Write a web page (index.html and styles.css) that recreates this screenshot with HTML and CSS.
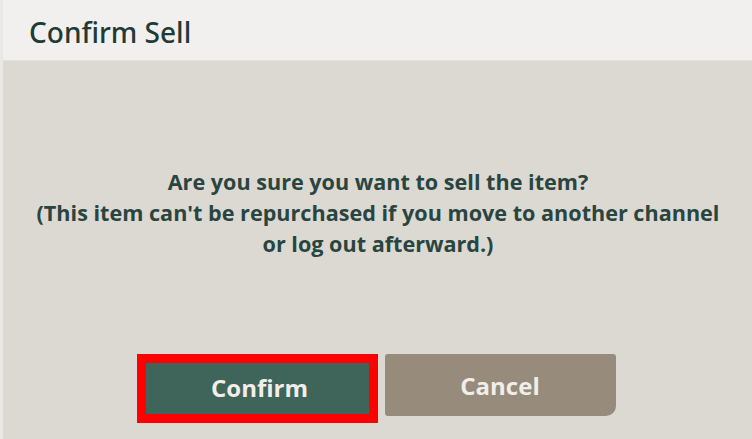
FILE: index.html
```html
<!DOCTYPE html>
<html>
<head>
<meta charset="utf-8">
<link rel="stylesheet" href="styles.css">
</head>
<body>
<div class="dialog">
  <div class="header"><h1 class="title">Confirm Sell</h1></div>
  <div class="content">
    <p class="message">Are you sure you want to sell the item?<br>(This item can't be repurchased if you move to another channel<br>or log out afterward.)</p>
    <div class="actions">
      <button class="btn btn-confirm">Confirm</button>
      <button class="btn btn-cancel">Cancel</button>
    </div>
  </div>
</div>
</body>
</html>
```
FILE: styles.css
```css
html, body {
  margin: 0;
  padding: 0;
  width: 752px;
  height: 439px;
  overflow: hidden;
  background: #dcd9d2;
}
.dialog {
  width: 752px;
  height: 439px;
  display: flex;
  flex-direction: column;
  border-left: 3px solid #e9e8e5;
  box-sizing: border-box;
}
.header {
  height: 61px;
  background: #f1f0ee;
  border-bottom: 1px solid #e3e1dc;
  display: flex;
  align-items: center;
  padding-left: 26px;
  box-sizing: border-box;
}
.title {
  margin: 0;
  font-family: "Noto Sans", sans-serif;
  font-weight: 500;
  font-size: 28px;
  color: #1f3b36;
  padding-top: 4px;
}
.content {
  flex: 1;
  display: flex;
  flex-direction: column;
  align-items: center;
  background: #dcd9d2;
}
.message {
  margin: 105px 0 0 1px;
  text-align: center;
  font-family: "Open Sans", sans-serif;
  font-weight: 700;
  font-size: 21.6px;
  line-height: 31px;
  color: #2a4540;
}
.actions {
  margin-top: 95px;
  display: flex;
  align-items: flex-start;
  gap: 7px;
  margin-left: -3px;
}
.btn {
  font-family: "Open Sans", sans-serif;
  font-weight: 700;
  font-size: 24px;
  color: #f1eee9;
  border: none;
  padding: 0;
  cursor: pointer;
}
.btn-confirm {
  width: 241px;
  height: 69px;
  background: #3f645a;
  border: 9px solid #ff0000;
  padding: 0 0 3px 5px;
}
.btn-cancel {
  width: 231px;
  height: 62px;
  background: #978b7c;
  border-radius: 3px 3px 10px 3px;
}
```
